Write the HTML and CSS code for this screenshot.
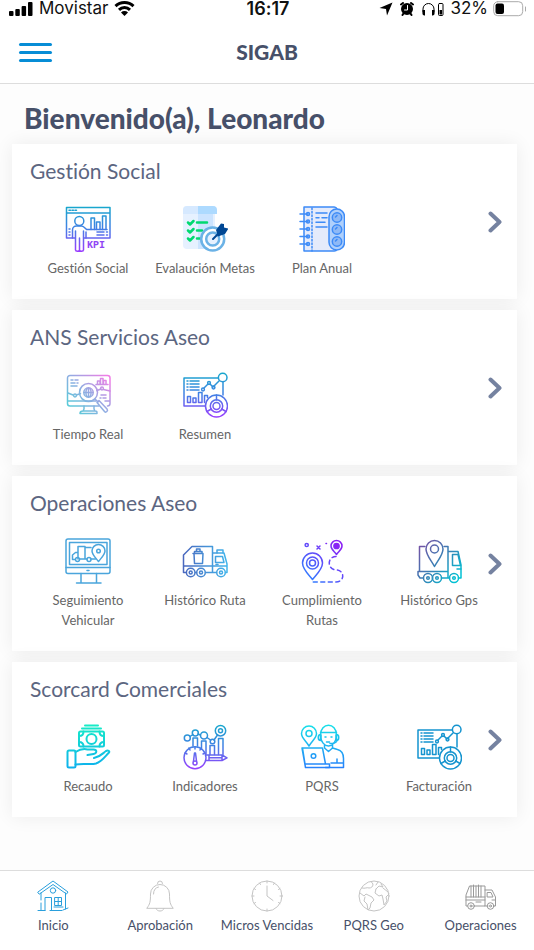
FILE: index.html
```html
<!DOCTYPE html>
<html lang="es">
<head>
  <meta charset="UTF-8" />
  <meta name="viewport" content="width=device-width, initial-scale=1" />
  <title>SIGAB</title>
  <link rel="stylesheet" href="styles.css">
</head>
<body>
  <!-- Shared gradients and symbols -->
  <svg class="defs" aria-hidden="true">
    <defs>
      <linearGradient id="gBlueViolet" gradientUnits="userSpaceOnUse" x1="0" y1="0" x2="0" y2="46">
        <stop offset="0" stop-color="#16a9cc" /><stop offset="0.5" stop-color="#437fe5" /><stop offset="1" stop-color="#9c3cff" />
      </linearGradient>
      <linearGradient id="gPink" gradientUnits="userSpaceOnUse" x1="4" y1="42" x2="42" y2="4">
        <stop offset="0" stop-color="#4cd3d6" /><stop offset="0.5" stop-color="#8eaee2" /><stop offset="1" stop-color="#f07de6" />
      </linearGradient>
      <linearGradient id="gTruck" gradientUnits="userSpaceOnUse" x1="0" y1="0" x2="46" y2="0">
        <stop offset="0" stop-color="#4a65bd" /><stop offset="1" stop-color="#42b6ec" />
      </linearGradient>
      <linearGradient id="gRoute" gradientUnits="userSpaceOnUse" x1="8" y1="40" x2="38" y2="6">
        <stop offset="0" stop-color="#327dff" /><stop offset="1" stop-color="#8a20f5" />
      </linearGradient>
      <linearGradient id="gGps" gradientUnits="userSpaceOnUse" x1="4" y1="6" x2="42" y2="40">
        <stop offset="0" stop-color="#7651a5" /><stop offset="0.5" stop-color="#397fb4" /><stop offset="1" stop-color="#00c2d4" />
      </linearGradient>
      <linearGradient id="gMoney" gradientUnits="userSpaceOnUse" x1="0" y1="0" x2="0" y2="46">
        <stop offset="0" stop-color="#17edc6" /><stop offset="1" stop-color="#0daeef" />
      </linearGradient>
      <linearGradient id="gPqrs" gradientUnits="userSpaceOnUse" x1="0" y1="0" x2="0" y2="46">
        <stop offset="0" stop-color="#16e2e8" /><stop offset="1" stop-color="#287dfc" />
      </linearGradient>
    </defs>

    <symbol id="dashboard" viewBox="0 0 46 46">
      <path d="M36 6H2v28h21M41 10v13" />
      <circle cx="40.700" cy="5.500" r="4.300" />
      <path d="M5 9h1M8 9h9M5 12h1M8 12h9M5 15h1M8 15h9M5 18h1M8 18h9" />
      <path d="M22 16l4-4M28 12l3 3 6-6" />
      <circle cx="21" cy="17.500" r="1.400" /><circle cx="27" cy="11" r="1.400" /><circle cx="31.500" cy="15.500" r="1.400" />
      <path d="M5.500 24.500h3v6h-3zM11 26h3v4.500h-3zM16.500 20.500h3.500v10h-3.500zM22.500 30.500v-7h3v2" />
      <circle cx="34.500" cy="34" r="11" /><circle cx="34.500" cy="34" r="6.200" /><circle cx="34.500" cy="34" r="3.500" />
      <path d="M34.500 23v5M25 39.500l4.300-2.500M44 39.500L39.700 37" />
    </symbol>

    <symbol id="chevron" viewBox="0 0 14 22">
      <path d="M2.500 2.500L11.500 11l-9 8.500" />
    </symbol>
  </svg>

  <div class="status-bar">
    <div class="status-left">
      <svg class="signal" viewBox="0 0 24 14">
        <rect x="0" y="9" width="4.500" height="5" rx="1" /><rect x="6.300" y="7" width="4.500" height="7" rx="1" /><rect x="12.600" y="4" width="4.500" height="10" rx="1" /><rect x="19" y="0" width="4.500" height="14" rx="1" />
      </svg>
      <span>Movistar</span>
      <svg class="wifi" viewBox="0 0 21 15">
        <path d="M1.500 5.200a13 13 0 0 1 18 0M5 8.800a8 8 0 0 1 11 0" />
        <path class="wifi-dot" d="M10.500 15L7 11.500a5 5 0 0 1 7 0z" />
      </svg>
    </div>
    <time class="clock">16:17</time>
    <div class="status-right">
      <svg class="arrow-icon" viewBox="0 0 14 14"><path d="M13.500 0.500L8 13.500 7 7 0.500 6z" /></svg>
      <svg class="alarm" viewBox="0 0 14 14">
        <circle cx="7" cy="7" r="5" /><path d="M1 2.500L3 1M13 2.500L11 1M2.500 13l1-1.500M11.500 13l-1-1.500" />
        <path class="hands" d="M7.500 3.500V8H4.500" />
      </svg>
      <svg class="headphones" viewBox="0 0 24 14">
        <path d="M2 10V7a5.500 5.500 0 0 1 11 0v3" />
        <path class="pads" d="M1.500 8H4v5.500H3.500A2 2 0 0 1 1.500 11zM13.500 8H11v5.500h.500a2 2 0 0 0 2-2.500z" />
        <rect x="17.500" y="1.500" width="4.500" height="12" rx="1" /><rect class="pads" x="18.500" y="8" width="2.500" height="4.500" />
      </svg>
      <span>32%</span>
      <svg class="battery" viewBox="0 0 34 16">
        <rect x="0.700" y="0.700" width="29" height="14" rx="4" /><rect class="charge" x="2.500" y="2.500" width="8.500" height="10.500" rx="2" /><path d="M32.500 6v4" />
      </svg>
    </div>
  </div>

  <header class="header">
    <button class="menu" type="button" aria-label="Menú"><span></span><span></span><span></span></button>
    <h1>SIGAB</h1>
  </header>

  <main>
    <h2>Bienvenido(a), Leonardo</h2>

    <section class="card">
      <div class="card-body">
        <h3>Gestión Social</h3>
        <div class="items">
          <a class="item" href="#">
            <svg class="icon" viewBox="0 0 46 46" stroke="url(#gBlueViolet)">
              <path d="M10 32H1.500V1.500h43.500V32H19M1.500 7H45" />
              <path d="M4 4.300h1.500M7 4.300h1.500M10 4.300h1.500" />
              <circle cx="14.300" cy="15" r="4.500" />
              <path d="M10.500 44V25M7.500 32v-8c0-2.500 2-4 4-4h5c2 0 3 1.500 5 3.500H42M18.500 25v19M14.500 32v12M21 32v-6M10.500 44c0 1.500 4 1.500 4 0 0 1.500 4 1.500 4 0" />
              <path d="M26 23.500V12h3.500v11.500M31.500 23.500V16H35v7.500M37.500 23.500V10H41v13.500" />
              <path d="M32 26h7M32 29h7M41.500 26h1M41.500 29h1M4 23h1M4 26h1M4 29h1" />
              <text x="22" y="42" class="kpi">KPI</text>
            </svg>
            <span>Gestión Social</span>
          </a>
          <a class="item" href="#">
            <svg class="icon" viewBox="0 0 46 46">
              <path fill="#e6f1ff" d="M5 0h28v43H5a4 4 0 0 1-4-4V4a4 4 0 0 1 4-4z" />
              <path fill="#cce4ff" d="M16 0h15v43H16z" />
              <path fill="#addaff" d="M16 0h15a4 4 0 0 1 4 4v4H16z" />
              <path fill="#cce4ff" d="M1 4a4 4 0 0 1 4-4h11v8H1z" opacity="0.6" />
              <path stroke="#00d970" stroke-width="2.500" d="M6 16.500l2 2 3.500-3.500M6 24.500l2 2 3.500-3.500M6 32.500l2 2 3.500-3.500M15 16.500h10M15 24.500h5M15 32.500h3" />
              <circle cx="30.700" cy="33" r="11.500" fill="#fff" stroke="#6bb2e6" stroke-width="2.500" />
              <circle cx="30.700" cy="33" r="6.500" fill="#e6f1ff" stroke="#6bb2e6" stroke-width="2.500" />
              <path stroke="#004794" stroke-width="2" d="M31 33l9-9" />
              <path fill="#004794" d="M34 24l5-6.500 3 .500 0 3.500 4.500 1-3.500 5.500-7 2.500z" />
            </svg>
            <span>Evalaución Metas</span>
          </a>
          <a class="item" href="#">
            <svg class="icon" viewBox="0 0 46 46" stroke="#3d8bf7">
              <path fill="#e5ebfb" d="M38 3a3 3 0 0 0-3-2H5v44h30a3 3 0 0 0 3-2" />
              <path d="M1 8h8M1 15.500h8M1 23h8M1 30.500h8M1 38h8" />
              <circle cx="9" cy="8" r="1.500" /><circle cx="9" cy="15.500" r="1.500" /><circle cx="9" cy="23" r="1.500" /><circle cx="9" cy="30.500" r="1.500" /><circle cx="9" cy="38" r="1.500" />
              <path stroke-dasharray="1.500 2" d="M13 2v43" />
              <path d="M17 7h11M17 11.700h3M23 11.700h5M17 16.300h9M17 21h11" />
              <rect x="30" y="3" width="15.500" height="41" rx="7.700" fill="#afd0fc" />
              <circle cx="38" cy="11.500" r="4.700" fill="#8eb9f6" /><circle cx="38" cy="23.500" r="4.700" fill="#8eb9f6" /><circle cx="38" cy="35.500" r="4.700" fill="#8eb9f6" />
              <path d="M36.500 11l1.500-1.500M36.500 23l1.500-1.500M36.500 35l1.500-1.500" />
            </svg>
            <span>Plan Anual</span>
          </a>
        </div>
      </div>
      <button class="next" type="button" aria-label="Ver más"><svg><use href="#chevron" /></svg></button>
    </section>

    <section class="card">
      <div class="card-body">
        <h3>ANS Servicios Aseo</h3>
        <div class="items">
          <a class="item" href="#">
            <svg class="icon" viewBox="0 0 46 46" stroke="url(#gPink)">
              <path d="M34 34H5a2.500 2.500 0 0 1-2.500-2.500V6A2.500 2.500 0 0 1 5 3.500h37.500A2.500 2.500 0 0 1 45 6v25.500a2.500 2.500 0 0 1-2.500 2.500M2.500 29H31M40 29h5" />
              <path d="M19 34v3l-1 2M29 34v3l1 2M15 41.500c0-2 1-2.500 3-2.500h12c2 0 2 .500 2 2.500z" />
              <circle cx="23.500" cy="20.500" r="9" /><circle cx="23.500" cy="20.500" r="4.700" />
              <path d="M19 20.500h9M23.500 16v9M22 16.500c-1.500 2-1.500 6 0 8M25 16.500c1.500 2 1.500 6 0 8" />
              <path d="M30 27l3 3M32 30.500l2-2 8 8.500c1.500 2-1 4-2.500 2.500z" />
              <path d="M3 21l5 2M11.500 23l4-1.500M32 18.500l4-1.500M38.500 17.500L45 19" />
              <circle cx="10" cy="23.500" r="1.400" /><circle cx="37" cy="16.500" r="1.400" />
              <path d="M31 12.500h12M32.500 12.500V9h2.500v3.500M35.500 12V6.500H38V12M38.500 12V8.500H41V12" />
              <path d="M6 8h2M10 8h3M6 11h4M12 11h1M6 14h6M36 23h5M35 26h1M38 26h3" />
            </svg>
            <span>Tiempo Real</span>
          </a>
          <a class="item" href="#">
            <svg class="icon" stroke="url(#gBlueViolet)"><use href="#dashboard" /></svg>
            <span>Resumen</span>
          </a>
        </div>
      </div>
      <button class="next" type="button" aria-label="Ver más"><svg><use href="#chevron" /></svg></button>
    </section>

    <section class="card">
      <div class="card-body">
        <h3>Operaciones Aseo</h3>
        <div class="items">
          <a class="item" href="#">
            <svg class="icon" viewBox="0 0 46 46" stroke="#4aa5dc">
              <rect x="1" y="1" width="44" height="34.500" rx="2" /><rect x="4.500" y="4.500" width="37.500" height="22" />
              <path d="M1 29.500h44M22 32.500h2M16 35.500v9.500M31.500 35.500v9.500M11.500 45h24.500" />
              <path d="M13 21V8.500h7V21h-5M20 9.500h6M20 21h2M10 21.500H7.500V17l3-2.500H13M25.500 21h5" />
              <circle cx="12.500" cy="21.500" r="2" /><circle cx="24" cy="21.500" r="2" />
              <path d="M33.500 23.500c-3-4-6.500-7-6.500-10.500a6.500 6.500 0 0 1 13 0c0 3.500-3.500 6.500-6.500 10.500z" /><circle cx="33.500" cy="13" r="1.800" />
            </svg>
            <span>Seguimiento Vehicular</span>
          </a>
          <a class="item" href="#">
            <svg class="icon" viewBox="0 0 46 46" stroke="url(#gTruck)">
              <path d="M4 34.500H1.500V17L10 8.500h20.500V34.500M1.500 28H45M13.500 34.500h1M23.500 34.500h11M30.500 15H42l3 11v8.500h-1.500" />
              <path d="M33.500 18.500h7l1.500 6h-8.500zM35 15v-3h6v3M34 26.500h2" />
              <path d="M11 15.500h10M12 15.500l.500 10h8l.500-10M12.500 15.500v-2h7.500v2M14.500 13.500V11h3.500v2.500" />
              <circle cx="8.700" cy="34.500" r="4.300" /><circle cx="8.700" cy="34.500" r="1.500" /><circle cx="19" cy="34.500" r="4.300" /><circle cx="19" cy="34.500" r="1.500" /><circle cx="39" cy="34.500" r="4.300" /><circle cx="39" cy="34.500" r="1.500" />
            </svg>
            <span>Histórico Ruta</span>
          </a>
          <a class="item" href="#">
            <svg class="icon" viewBox="0 0 46 46" stroke="url(#gRoute)">
              <path d="M13.500 41.500C9 36 3.500 31 3.500 25a10 10 0 0 1 20 0c0 6-5.500 11-10 16.500z" />
              <circle cx="13.500" cy="25" r="6" /><circle cx="13.500" cy="25" r="3" />
              <path d="M37.500 16.500c-2-3-5.500-5-5.500-8.500a5.500 5.500 0 0 1 11 0c0 3.500-3.500 5.500-5.500 8.500z" /><circle cx="37.500" cy="8" r="2.600" fill="#8a20f5" />
              <circle cx="7.700" cy="7" r="1.600" /><path d="M18 8l3 3M21 8l-3 3M27 5.500h.500" />
              <path stroke-dasharray="4 3.500" d="M37 18.500c-9 0-9 13 0 13.500 9 0 9 12 0 12H13" />
            </svg>
            <span>Cumplimiento Rutas</span>
          </a>
          <a class="item" href="#">
            <svg class="icon" viewBox="0 0 46 46" stroke="url(#gGps)">
              <path d="M9 8.500H3.500v25M28 8.500h4v25M2 33.500h30v-20h10l3 13.500v13h-2.500M7 40H4l-2-3v-3.500M25.500 40h8M32 33.500v6" />
              <path d="M36.500 16.500v11h8L42 16.500zM41 31h4" />
              <path d="M18.500 28.500C15 22 10 17 10 11a8.500 8.500 0 0 1 17 0c0 6-5 11-8.500 17.500z" /><circle cx="18.500" cy="11" r="4" />
              <circle cx="12" cy="40" r="4.500" /><circle cx="12" cy="40" r="1.300" /><circle cx="21" cy="40" r="4.500" /><circle cx="21" cy="40" r="1.300" /><circle cx="38" cy="40" r="4.500" /><circle cx="38" cy="40" r="1.300" />
            </svg>
            <span>Histórico Gps</span>
          </a>
        </div>
      </div>
      <button class="next" type="button" aria-label="Ver más"><svg><use href="#chevron" /></svg></button>
    </section>

    <section class="card">
      <div class="card-body">
        <h3>Scorcard Comerciales</h3>
        <div class="items">
          <a class="item" href="#">
            <svg class="icon bold" viewBox="0 0 46 46" stroke="url(#gMoney)">
              <rect x="14" y="7.500" width="25" height="15" rx="1.500" /><circle cx="26.500" cy="15" r="5" />
              <path d="M17 4.500h19M20 1.500h13M14 12c3 0 4.500-1.500 4.500-4.500M39 12c-3 0-4.500-1.500-4.500-4.500M14 18c3 0 4.500 1.500 4.500 4.500M39 18c-3 0-4.500 1.500-4.500 4.500" />
              <rect x="2.500" y="26.500" width="8" height="17" rx="1.500" />
              <path d="M10.500 28c4-2.500 8-3.500 12-2.500h6c4 0 3.500 4 0 4.500l-6 1M29 34c6-1 8-4 12-7 2-1 4 0 3 1.500-4 4-7 9-13 11-5 1.500-12-.500-20.500 1" />
            </svg>
            <span>Recaudo</span>
          </a>
          <a class="item" href="#">
            <svg class="icon" viewBox="0 0 46 46" stroke="url(#gBlueViolet)">
              <circle cx="5.300" cy="14" r="3" /><circle cx="13.300" cy="9" r="3" /><circle cx="22" cy="11.500" r="3.500" /><circle cx="30.500" cy="17.500" r="2.300" /><circle cx="38.500" cy="6.700" r="5.200" /><circle cx="38.500" cy="6.700" r="2" />
              <path d="M8 12.500l3-2M16 10l2.500 1M25 13.500l3.500 2.500M32 16l3.500-5" />
              <path d="M11 22v-8h4.500v8M19.500 25v-8H24v13M28 30.500V21.500h4.500v9M36.500 30.500V14.500H41v16" />
              <circle cx="13" cy="33.700" r="11" /><circle cx="13" cy="39" r="2" /><path d="M11.500 37l1-8h1l1 8M5 30l-2-1M8 26l-1-2M13 25v-2M18 26l1-2M21 30l2-1" />
              <path d="M23.500 31H40l5 2.800L40 36.500H23.500M27 31v5.500M40 31v5.500M28 33.700h11" />
            </svg>
            <span>Indicadores</span>
          </a>
          <a class="item" href="#">
            <svg class="icon" viewBox="0 0 46 46" stroke="url(#gPqrs)">
              <path d="M10 22C7 17 2.500 14 2.500 9.500a7.500 7.500 0 0 1 15 0C17.500 14 13 17 10 22z" /><circle cx="10" cy="9.500" r="3" />
              <path d="M21.500 11c0-13 16-13 16 0M21.500 8.500h16M22 11v3c0 3 3 8 7.500 8s7.500-5 7.500-8v-3" />
              <path d="M21.500 10.500c-3 0-3 6 0 6zM37.500 10.500c3 0 3 6 0 6zM38 17c-1 2-3 2.500-7 2.500M26 13h1M32 13h1M27.500 18h3" />
              <path d="M25.500 21v3l4 3.500 4-3.500v-3M33.500 24l5 1.500c4 1 6 4 6 9v9H26.500M38 35v4M44.500 39H32" />
              <path d="M3.500 24h20l3 16M3.500 24l2.500 16h24.500v3.500H6.500L3 24" /><circle cx="14.500" cy="32" r="2.300" />
            </svg>
            <span>PQRS</span>
          </a>
          <a class="item" href="#">
            <svg class="icon" stroke="#1594cf"><use href="#dashboard" /></svg>
            <span>Facturación</span>
          </a>
        </div>
      </div>
      <button class="next" type="button" aria-label="Ver más"><svg><use href="#chevron" /></svg></button>
    </section>
  </main>

  <nav class="tabs">
    <a class="active" href="#">
      <svg viewBox="0 0 32 32">
        <path d="M1 12L16 1l15 11-1.500 2L16 4.500 2.500 14zM4 13v7M4 23v7M28.500 13v16M1 30.500h7M13 30.500h12M8 30.500V17.500h6.500v13M18 17.500h6.500v8H18zM18 21.500h6.500M21.200 17.500v8M17 27h9M26 30l5-2" />
        <circle cx="16" cy="10.500" r="2.700" />
      </svg>
      <span>Inicio</span>
    </a>
    <a href="#">
      <svg viewBox="0 0 32 32">
        <path d="M13.500 3.500a2.500 2.500 0 0 1 5 0M3 28c3-4 3.500-6 3.500-14a9.500 9.500 0 0 1 19 0c0 8 .500 10 3.500 14zM9.500 14c0-4 2-6.500 5-7M12 28.500c1 3.500 7 3.500 8 0" />
      </svg>
      <span>Aprobación</span>
    </a>
    <a href="#">
      <svg viewBox="0 0 32 32">
        <circle cx="16" cy="16" r="15" /><path d="M16 6v10l6 4.500M16 1v2M16 29v2M1 16h2M29 16h2M8.500 3l1 1.500M23.500 3l-1 1.500M3 8.500l1.500 1M29 8.500l-1.500 1M3 23.500l1.500-1M29 23.500l-1.500-1" />
      </svg>
      <span>Micros Vencidas</span>
    </a>
    <a href="#">
      <svg viewBox="0 0 32 32">
        <circle cx="16" cy="16" r="15" />
        <path d="M4 8c3 1 5-1 7 0 2 0 4-1 4-4l-2-2.500M2 13l4 3 2-2 6 3 2 3-3 3-1 5-2 2-1-6-3-3 1-4M18 9l3-3 4 1-2-3M18 9l-1 4 4 3 3-1 1 4 1 6 3-4-1-4 3-3M25 8l5 4M20 2l-2 3" />
      </svg>
      <span>PQRS Geo</span>
    </a>
    <a class="dark" href="#">
      <svg viewBox="0 0 32 32">
        <path d="M2.500 26H1V15L4.500 6h15.500v20H9.500M1 17h19M1 20h19M20 10h7l3.500 7v9h-2M20 26h3M22.500 12.500h3.500l2 4.500h-5.500zM6 6v11M8.500 5v12M11 6v11M13.500 5v12M16 6v11M27 20h3M11 22h5" />
        <circle cx="6" cy="26" r="3.300" /><circle cx="6" cy="26" r="1" /><circle cx="25.500" cy="26" r="3.300" /><circle cx="25.500" cy="26" r="1" />
      </svg>
      <span>Operaciones</span>
    </a>
  </nav>
</body>
</html>
```
FILE: styles.css
```css
* {
  box-sizing: border-box;
}

body {
  margin: 0;
  height: 100vh;
  display: flex;
  flex-direction: column;
  font-family: "Gill Sans", Lato, sans-serif;
  font-variant-ligatures: none;
  background: #fff;
  color: #475069;
}

button {
  padding: 0;
  border: none;
  background: none;
  cursor: pointer;
}

a {
  color: inherit;
  text-decoration: none;
}

svg {
  fill: none;
  stroke-linecap: round;
  stroke-linejoin: round;
}

.defs {
  position: absolute;
  width: 0;
  height: 0;
}

/* Phone status bar */
.status-bar {
  display: grid;
  grid-template-columns: 1fr auto 1fr;
  align-items: center;
  height: 17px;
  padding: 0 7px 0 9px;
  font-family: Inter, sans-serif;
  font-size: 17px;
  line-height: 17px;
  color: #111;
  white-space: nowrap;
}

.status-left,
.status-right {
  display: flex;
  align-items: center;
  gap: 6px;
}

.status-right {
  justify-content: flex-end;
  gap: 5px;
}

.status-bar svg {
  fill: #000;
}

.clock {
  font-size: 18px;
  font-weight: 600;
}

.signal {
  width: 24px;
  height: 14px;
}

.wifi {
  width: 21px;
  height: 15px;
}

.status-bar .wifi,
.status-bar .headphones,
.status-bar .battery {
  fill: none;
  stroke: #000;
}

.wifi {
  stroke-width: 3;
  stroke-linecap: butt;
}

.wifi-dot,
.pads {
  fill: #000;
  stroke: none;
}

.arrow-icon,
.alarm {
  width: 14px;
  height: 14px;
}

.alarm {
  margin: 0 2px;
  stroke: #000;
  stroke-width: 2;
}

.alarm .hands {
  fill: none;
  stroke: #fff;
  stroke-width: 1;
}

.headphones {
  width: 24px;
  height: 14px;
}

.battery {
  width: 34px;
  height: 16px;
}

.status-bar .battery {
  stroke: #aaa;
}

.battery .charge {
  fill: #000;
  stroke: none;
}

/* Header */
.header {
  display: grid;
  grid-template-columns: 1fr auto 1fr;
  align-items: center;
  height: 67px;
  padding: 4px 19px 0;
  border-bottom: 1px solid #ddd;
}

.header h1 {
  margin: 0;
  font-size: 21px;
  font-weight: 900;
  line-height: 24px;
}

.menu {
  display: grid;
  gap: 5px;
  width: 33px;
}

.menu span {
  height: 3px;
  border-radius: 2px;
  background: #078dd6;
}

/* Cards */
main {
  flex: 1;
  display: flex;
  flex-direction: column;
  gap: 11px;
  padding: 20px 17px 11px 12px;
  background: #fdfdfd;
  overflow: hidden;
}

h2 {
  margin: 0 12px 1px;
  font-size: 28px;
  font-weight: 900;
  line-height: 28px;
}

.card {
  display: flex;
  align-items: center;
  padding: 12px 15px 12px 18px;
  background: #fff;
  box-shadow: 0 0 18px rgba(0, 0, 0, 0.07);
}

.card-body {
  flex: 1;
  padding-bottom: 9px;
}

h3 {
  margin: 0 0 20px;
  font-size: 21px;
  font-weight: 400;
  line-height: 30px;
  color: #5c6681;
}

.items {
  display: grid;
  grid-template-columns: repeat(4, 1fr);
  gap: 13px;
  margin: 0 -3px 0 6px;
}

.item {
  display: flex;
  flex-direction: column;
  align-items: center;
  gap: 6px;
  font-size: 13px;
  line-height: 20px;
  text-align: center;
  color: #666;
}

.icon {
  width: 46px;
  height: 46px;
  stroke-width: 1.5;
}

.icon.bold {
  stroke-width: 2;
}

.kpi {
  fill: #9045f5;
  stroke: none;
  font: bold 10px "Liberation Mono", monospace;
}

.next svg {
  display: block;
  width: 14px;
  height: 22px;
  stroke: #7582a0;
  stroke-width: 4;
}

/* Bottom tabs */
.tabs {
  display: grid;
  grid-template-columns: repeat(5, 1fr);
  padding: 9px 0 15px;
  border-top: 1px solid #ddd;
  background: #fff;
}

.tabs a {
  display: flex;
  flex-direction: column;
  align-items: center;
  gap: 3px;
  font-size: 13px;
  line-height: 20px;
  white-space: nowrap;
}

.tabs svg {
  width: 32px;
  height: 32px;
  stroke: #c4c4c4;
}

.tabs .active svg {
  stroke: #2a9fdc;
}

.tabs .dark svg {
  stroke: #999;
}
```
